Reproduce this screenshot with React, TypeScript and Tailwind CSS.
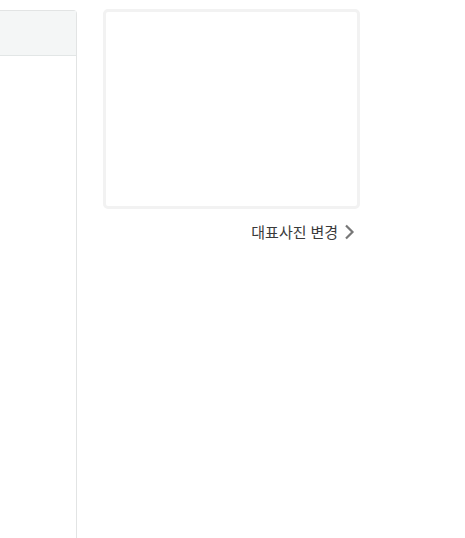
import React from "react";

export default function App() {
  return (
    <div className="flex h-[538px] w-[465px] overflow-hidden bg-white" style={{ fontFamily: '"Noto Sans", "Noto Sans CJK KR", sans-serif' }}>
      <div className="mt-[10px] flex h-[540px] w-[77px] shrink-0 flex-col rounded-tr-[4px] border-r border-t border-[#e2e4e4]">
        <div className="h-[45px] border-b border-[#e2e6e6] bg-[#f4f6f6]" />
        <div className="flex-1 bg-white" />
      </div>
      <div className="ml-[26px] mt-[9px] flex w-[257px] flex-col">
        <div className="h-[200px] w-[257px] rounded-[5px] border-[3px] border-[#f2f2f2] bg-white" />
        <button className="mt-[13px] flex items-center justify-end gap-[6px] self-end pr-[5px] text-[15px] font-normal leading-[20px] text-[#3a3a3a]">
          <span>대표사진 변경</span>
          <svg width="11" height="16" viewBox="0 0 11 16" fill="none">
            <path d="M2 1.5 L8.5 8 L2 14.5" stroke="#777" strokeWidth="2.2" />
          </svg>
        </button>
      </div>
    </div>
  );
}
